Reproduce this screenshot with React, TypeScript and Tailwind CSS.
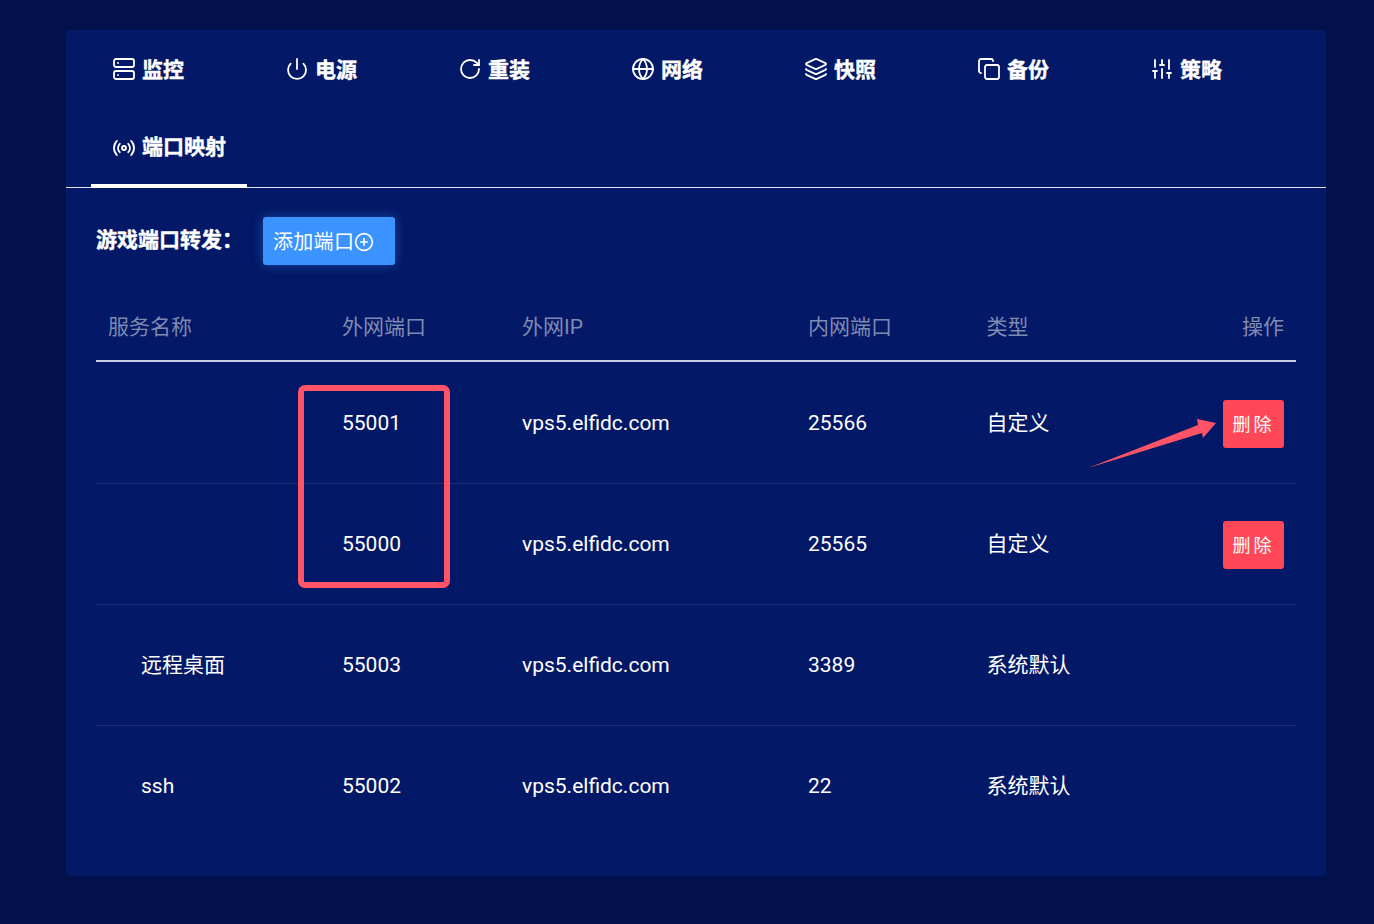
import { Server, Power, RotateCw, Globe, Layers, Copy, SlidersVertical, Radio, CirclePlus } from "lucide-react";

const tabs = [
  { label: "监控", Icon: Server },
  { label: "电源", Icon: Power },
  { label: "重装", Icon: RotateCw },
  { label: "网络", Icon: Globe },
  { label: "快照", Icon: Layers },
  { label: "备份", Icon: Copy },
  { label: "策略", Icon: SlidersVertical },
];

const rows = [
  { name: "", port: "55001", ip: "vps5.elfidc.com", inner: "25566", type: "自定义", del: true },
  { name: "", port: "55000", ip: "vps5.elfidc.com", inner: "25565", type: "自定义", del: true },
  { name: "远程桌面", port: "55003", ip: "vps5.elfidc.com", inner: "3389", type: "系统默认", del: false },
  { name: "ssh", port: "55002", ip: "vps5.elfidc.com", inner: "22", type: "系统默认", del: false },
];

export default function App() {
  return (
    <div className="relative min-h-[924px] bg-[#02114b] pt-[30px] px-[48px] pb-[48px] font-['Roboto','Noto_Sans_CJK_SC',sans-serif] text-white">
      <div className="ml-[18px] w-[1260px] h-[846px] rounded-[4px] bg-[#031866]">
        <div className="flex flex-wrap pl-[25px] border-b border-[#dfe3f0] h-[158px]">
          {tabs.map(({ label, Icon }) => (
            <div key={label} className="flex w-[173px] h-[78px] items-center pl-[21px] pt-[4px] gap-[6px] text-[21px] font-bold [-webkit-text-stroke:0.4px_white]">
              <Icon size={24} strokeWidth={1.8} className="shrink-0 -mt-[4px]" />
              <span>{label}</span>
            </div>
          ))}
          <div className="flex w-[156px] h-[79px] items-center pl-[21px] pt-[3px] gap-[6px] text-[21px] font-bold [-webkit-text-stroke:0.4px_white] border-b-[4px] border-white -mb-px">
            <Radio size={24} strokeWidth={1.8} className="shrink-0" />
            <span>端口映射</span>
          </div>
        </div>
        <div className="px-[30px]">
          <div className="flex items-center h-[48px] mt-[29px]">
            <span className="w-[167px] text-[21px] font-bold [-webkit-text-stroke:0.4px_white]">游戏端口转发：</span>
            <button className="flex items-center w-[132px] h-[48px] pl-[10px] pt-[2px] rounded-[3px] bg-[#3a93ff] text-[20px] tracking-[0.3px] shadow-[0_0_12px_rgba(58,147,255,0.4)]">
              添加端口
              <CirclePlus size={20} strokeWidth={2} />
            </button>
          </div>
          <div className="flex items-center h-[71px] mt-[26px] mb-px pt-[5px] border-b-2 border-[#c9cfe3] text-[21px] text-[#7f8ab1]">
            <div className="w-[234px] pl-[12px]">服务名称</div>
            <div className="w-[180px] pl-[12px]">外网端口</div>
            <div className="w-[286px] pl-[12px]">外网IP</div>
            <div className="w-[178.5px] pl-[12px]">内网端口</div>
            <div className="w-[180.5px] pl-[12px]">类型</div>
            <div className="flex-1 pr-[12px] text-right">操作</div>
          </div>
          {rows.map((r, i) => (
            <div
              key={r.port}
              className={`flex items-center h-[121px] pt-[2px] text-[21px] border-b ${i < rows.length - 1 ? "border-[#1b2e75]" : "border-transparent"}`}
            >
              <div className="w-[234px] pl-[45px]">{r.name}</div>
              <div className="w-[180px] pl-[12px]">{r.port}</div>
              <div className="w-[286px] pl-[12px]">{r.ip}</div>
              <div className="w-[178.5px] pl-[12px]">{r.inner}</div>
              <div className="w-[180.5px] pl-[12px]">{r.type}</div>
              <div className="flex flex-1 justify-end pr-[12px]">
                {r.del && (
                  <button className="w-[61px] h-[48px] rounded-[3px] bg-[#ff4757] text-[18px] tracking-[3px]">删除</button>
                )}
              </div>
            </div>
          ))}
        </div>
      </div>
      <div className="absolute left-[298px] top-[385px] w-[152px] h-[203px] rounded-[7px] border-[6px] border-[#ff5468]" />
      <svg className="absolute left-0 top-0 pointer-events-none" width="1374" height="924" fill="none">
        <polygon points="1088,468 1198,425 1197,419 1216,423 1203,438 1202,433" fill="#ff5468" />
      </svg>
    </div>
  );
}
